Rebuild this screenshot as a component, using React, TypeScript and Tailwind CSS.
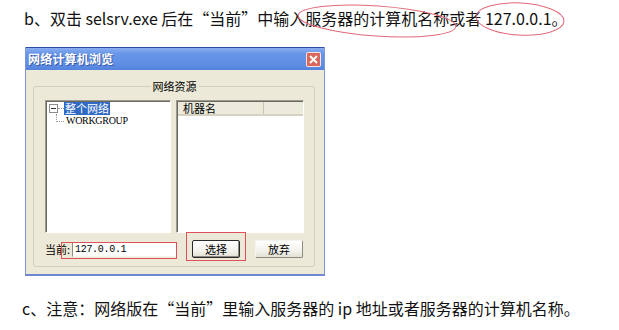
import React from "react";

const cjk = "font-['Noto_Sans_CJK_SC','Noto_Sans',sans-serif]";

const TreePane = () => {
  return (
    <div className="w-[126px] h-[133px] bg-white border border-t-[#9c9a8c] border-l-[#9c9a8c] border-r-white border-b-white shadow-[inset_1px_1px_0_#6b6a62] pl-[3px] pt-[1px]">
      <div className="flex items-center h-[13px]">
        <span className="w-[9px] h-[9px] border border-[#8c8c8c] bg-white flex items-center justify-center">
          <span className="w-[5px] h-px bg-[#333]" />
        </span>
        <span className="w-[6px] border-t border-dotted border-[#999]" />
        <span className="bg-[#316ac5] text-white text-[11px] leading-[13px] px-px">整个网络</span>
      </div>
      <div className="flex items-end h-[12px] pl-[7px]">
        <span className="w-[8px] h-[8px] border-l border-b border-dotted border-[#999] mb-[5px]" />
        <span className="ml-[2px] text-[10px] leading-[12px] font-['Liberation_Serif',serif] tracking-[-0.3px] text-black">
          WORKGROUP
        </span>
      </div>
    </div>
  );
};

const ListPane = () => {
  return (
    <div className="w-[128px] h-[133px] bg-white border border-t-[#9c9a8c] border-l-[#9c9a8c] border-r-white border-b-white shadow-[inset_1px_1px_0_#6b6a62] pl-px pt-px">
      <div className="flex h-[14px] bg-[#ebeadb] border-b-2 border-[#d6d2c2] text-[11px] leading-[12px] text-black">
        <div className="w-[86px] pl-[5px] border-r border-[#c7c5b2]">机器名</div>
        <div className="flex-1" />
      </div>
    </div>
  );
};

const XpButton = ({ label, primary }: { label: string; primary?: boolean }) => {
  return (
    <div
      className={
        "w-[48px] h-[18px] flex items-center justify-center text-[11px] text-black bg-[linear-gradient(to_bottom,#ffffff,#f3f2ec_60%,#e3e1d6)] border rounded-[2px] " +
        (primary
          ? "border-[#2a2a2a] shadow-[inset_-1px_-1px_0_#8c8a80]"
          : "border-t-[#f4f4f0] border-l-[#f4f4f0] border-r-[#8c8a80] border-b-[#8c8a80]")
      }
    >
      {label}
    </div>
  );
};

export default function App() {
  return (
    <div className={"relative w-[619px] h-[330px] bg-white overflow-hidden text-[#111] " + cjk}>
      <p className="pl-[24px] pt-[7px] text-[16px] leading-[22px] whitespace-nowrap">
        b、双击 selsrv.exe 后在“当前”中输入服务器的计算机名称或者 127.0.0.1。
      </p>

      {/* annotation ellipses */}
      <svg className="absolute left-0 top-0 pointer-events-none" width="619" height="45">
        <ellipse cx="377" cy="21" rx="79" ry="15" fill="none" stroke="#e06a7a" strokeWidth="1" transform="rotate(4 377 21)" />
        <ellipse cx="520" cy="19" rx="44" ry="16" fill="none" stroke="#e06a7a" strokeWidth="1" transform="rotate(3 520 19)" />
      </svg>

      {/* dialog */}
      <div className="ml-[25px] mt-[18px] w-[300px] h-[229px] flex flex-col border border-t-0 border-[#7d97d6] border-b-2 border-b-[#6f87d0] bg-[#ece9d8]">
        <div className="h-[23px] flex items-center justify-between pl-[2px] pr-[3px] bg-[linear-gradient(to_bottom,#8aaef0,#6896e8_25%,#5e8ee4_75%,#5382dc)] border-t border-[#2c4fa8]">
          <span className="text-white text-[12px] font-bold tracking-[0.2px] [text-shadow:1px_1px_0_#3558a8]">
            网络计算机浏览
          </span>
          <span className="w-[15px] h-[15px] rounded-[2px] bg-[#d8665a] border border-white/80 flex items-center justify-center">
            <svg width="9" height="9" viewBox="0 0 9 9">
              <path d="M1 1 L8 8 M8 1 L1 8" stroke="white" strokeWidth="2" />
            </svg>
          </span>
        </div>

        <div className="flex-1 pl-[7px] pr-[9px] pt-[9px]">
          <fieldset className="border border-[#d0d0bf] rounded-[3px] pl-[11px] pr-[10px] pt-[7px] pb-[8px]">
            <legend className="mx-auto px-[2px] text-[11px] leading-[14px] text-black">网络资源</legend>
            <div className="flex gap-[5px]">
              <TreePane />
              <ListPane />
            </div>
            <div className="relative mt-[7px] h-[18px] flex items-center">
              <span className="shrink-0 w-[27px] whitespace-nowrap text-[11px] text-black">当前:</span>
              <div className="w-[105px] h-[15px] bg-white border border-t-[#8c8a80] border-l-[#8c8a80] border-r-[#f4f4f0] border-b-[#f4f4f0] text-[10px] leading-[13px] pl-[2px] font-['Liberation_Mono',monospace] tracking-[-0.3px] text-black">
                127.0.0.1
              </div>
              <div className="ml-[15px]">
                <XpButton label="选择" primary />
              </div>
              <div className="ml-[15px]">
                <XpButton label="放弃" />
              </div>
              {/* red annotation boxes */}
              <span className="absolute left-[16px] top-[2px] w-[116px] h-[17px] border border-[#e0505a] pointer-events-none" />
              <span className="absolute left-[141px] top-[-8px] w-[60px] h-[29px] border border-[#e0505a] pointer-events-none" />
            </div>
          </fieldset>
        </div>
      </div>

      <p className="pl-[22px] mt-[21px] text-[16px] leading-[22px] whitespace-nowrap">
        c、注意：网络版在“当前”里输入服务器的 ip 地址或者服务器的计算机名称。
      </p>
    </div>
  );
}
